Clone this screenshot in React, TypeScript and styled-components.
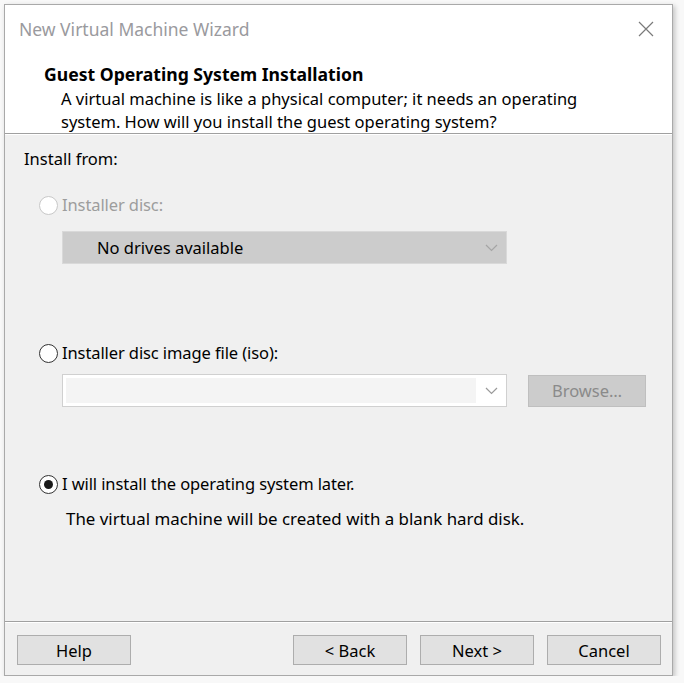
import React from 'react';
import styled, {createGlobalStyle} from "styled-components";

const GlobalStyle = createGlobalStyle`
  html, body {
    margin: 0;
    padding: 0;
    background: #f8f8f8;
    font-family: "Noto Sans", "Open Sans", sans-serif;
    font-size: 16.5px;
    color: #000;
  }
`

type RadioProps = {
    checked?: boolean
    disabled?: boolean
    label: string
}

const Radio = (props: RadioProps) => {
    return (
        <RadioRow>
            <Circle $disabled={props.disabled}>
                {props.checked && <Dot/>}
            </Circle>
            <RadioLabel $disabled={props.disabled}>{props.label}</RadioLabel>
        </RadioRow>
    );
};

const Chevron = ({color}: { color: string }) => (
    <svg width="13" height="8" viewBox="0 0 13 8">
        <path d="M1 1 L6.5 6.5 L12 1" fill="none" stroke={color} strokeWidth="1.2"/>
    </svg>
);

const App = () => {
    return (
        <>
            <GlobalStyle/>
            <Window>
                <Header>
                    <TitleBar>
                        <WindowTitle>New Virtual Machine Wizard</WindowTitle>
                        <Close>
                            <svg width="16" height="16" viewBox="0 0 16 16">
                                <path d="M1 1 L15 15 M15 1 L1 15" stroke="#7a7a7a" strokeWidth="1.2"/>
                            </svg>
                        </Close>
                    </TitleBar>
                    <Heading>Guest Operating System Installation</Heading>
                    <Description>
                        <DescLine>A virtual machine is like a physical computer; it needs an operating</DescLine>
                        <DescLine>system. How will you install the guest operating system?</DescLine>
                    </Description>
                </Header>

                <Body>
                    <Label>Install from:</Label>

                    <Option $top={26}>
                        <Radio disabled label="Installer disc:"/>
                    </Option>
                    <Indent $top={16}>
                        <Select>
                            <SelectText>No drives available</SelectText>
                            <Chevron color="#a5a5a5"/>
                        </Select>
                    </Indent>

                    <Option $top={79}>
                        <Radio label="Installer disc image file (iso):"/>
                    </Option>
                    <Indent $top={11}>
                        <Combo>
                            <ComboField/>
                            <ComboArrow><Chevron color="#9a9a9a"/></ComboArrow>
                        </Combo>
                        <BrowseButton>Browse…</BrowseButton>
                    </Indent>

                    <Option $top={67}>
                        <Radio checked label="I will install the operating system later."/>
                    </Option>
                    <Note>The virtual machine will be created with a blank hard disk.</Note>
                </Body>

                <Footer>
                    <Button>Help</Button>
                    <Spacer/>
                    <Button>&lt; Back</Button>
                    <Button>Next &gt;</Button>
                    <Button>Cancel</Button>
                </Footer>
            </Window>
        </>
    );
};

export default App;

const Window = styled.div`
  margin: 4px 0 0 4px;
  width: 667px;
  height: 670px;
  border: 1px solid #a9a9a9;
  box-shadow: 2px 2px 5px rgba(0, 0, 0, 0.22);
  background: #f0f0f0;
  display: flex;
  flex-direction: column;
`
const Header = styled.div`
  background: #fff;
  height: 128px;
  border-bottom: 1px solid #a0a0a0;
  box-shadow: 0 1px 0 #fff;
  padding-right: 3px;
`
const TitleBar = styled.div`
  height: 48px;
  display: flex;
  align-items: center;
  justify-content: space-between;
  padding-left: 14px;
`
const WindowTitle = styled.div`
  color: #9a9a9e;
  font-size: 17.5px;
`
const Close = styled.div`
  width: 46px;
  height: 30px;
  display: flex;
  align-items: center;
  justify-content: center;
`
const Heading = styled.div`
  margin-top: 11px;
  padding-left: 39px;
  font-weight: bold;
  font-size: 17.6px;
  line-height: 21px;
`
const Description = styled.div`
  margin-top: 2px;
  padding-left: 56px;
`
const DescLine = styled.div`
  line-height: 23px;
`
const Body = styled.div`
  flex: 1;
  display: flex;
  flex-direction: column;
  padding: 15px 0 0 19px;
  border-bottom: 1px solid #a0a0a0;
  box-shadow: 0 1px 0 #fff;
`
const Label = styled.div`
  line-height: 20px;
`
const Option = styled.div<{ $top: number }>`
  margin-top: ${props => props.$top}px;
  margin-left: 15px;
`
const RadioRow = styled.div`
  display: flex;
  align-items: center;
  height: 20px;
`
const Circle = styled.div<{ $disabled?: boolean }>`
  width: 17px;
  height: 17px;
  border-radius: 50%;
  border: 1px solid ${props => props.$disabled ? "#c8c8c8" : "#333"};
  background: #fff;
  display: flex;
  align-items: center;
  justify-content: center;
  margin-right: 4px;
  flex-shrink: 0;
`
const Dot = styled.div`
  width: 9px;
  height: 9px;
  border-radius: 50%;
  background: #1a1a1a;
`
const RadioLabel = styled.span<{ $disabled?: boolean }>`
  color: ${props => props.$disabled ? "#9d9d9d" : "#000"};
  line-height: 20px;
  letter-spacing: -0.1px;
`
const Indent = styled.div<{ $top: number }>`
  margin-top: ${props => props.$top}px;
  margin-left: 38px;
  display: flex;
  align-items: center;
  gap: 21px;
`
const Select = styled.div`
  box-sizing: border-box;
  width: 445px;
  height: 33px;
  background: #cccccc;
  border: 1px solid #d9d9d9;
  display: flex;
  align-items: center;
  justify-content: space-between;
  padding: 0 8px 0 34px;
`
const SelectText = styled.span`
  color: #000;
`
const Combo = styled.div`
  box-sizing: border-box;
  width: 445px;
  height: 33px;
  background: #fff;
  border: 1px solid #d0d0d0;
  display: flex;
  padding: 3px 0 3px 3px;
`
const ComboField = styled.div`
  flex: 1;
  background: #f4f4f4;
`
const ComboArrow = styled.div`
  width: 30px;
  display: flex;
  align-items: center;
  justify-content: center;
`
const BrowseButton = styled.div`
  box-sizing: border-box;
  width: 118px;
  height: 32px;
  background: #cccccc;
  border: 1px solid #bfbfbf;
  color: #8a8a8a;
  display: flex;
  align-items: center;
  justify-content: center;
`
const Note = styled.div`
  margin-top: 15px;
  margin-left: 42px;
  line-height: 20px;
  font-size: 16.9px;
`
const Footer = styled.div`
  height: 53px;
  display: flex;
  align-items: flex-start;
  gap: 13px;
  padding: 13px 11px 0 12px;
  box-sizing: border-box;
`
const Spacer = styled.div`
  flex: 1;
`
const Button = styled.div`
  box-sizing: border-box;
  width: 114px;
  height: 30px;
  background: #e1e1e1;
  border: 1px solid #adadad;
  display: flex;
  align-items: center;
  justify-content: center;
`
